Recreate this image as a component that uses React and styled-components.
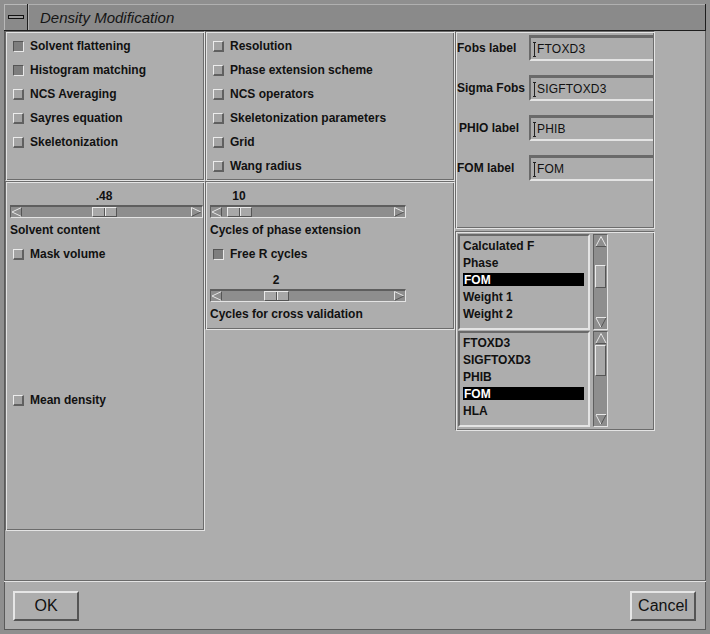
import React from "react";
import styled, { createGlobalStyle, css } from "styled-components";

const Global = createGlobalStyle`
  html, body { margin: 0; padding: 0; background: #9a9a9a; }
  #root { width: 710px; height: 634px; }
  * { box-sizing: border-box; }
`;

const FONT = `"Liberation Sans", Arial, Helvetica, sans-serif`;
const BG = "#adadad";
const DARK = "#6c6c6c";
const LIGHT = "#e4e4e4";

const Window = styled.div`
  width: 710px;
  height: 634px;
  display: flex;
  flex-direction: column;
  border: 4px solid #8f8f8f;
  box-shadow: inset 0 0 0 1px #5a5a5a;
  background: ${BG};
  font-family: ${FONT};
  color: #111;
`;

const TitleBar = styled.div`
  height: 27px;
  display: flex;
  align-items: stretch;
  background: #8a8a8a;
  border-bottom: 1px solid #1e1e1e;
  border-right: 1px solid #1e1e1e;
`;

const MenuButton = styled.div`
  width: 24px;
  display: flex;
  align-items: center;
  justify-content: center;
  border-right: 1px solid #1e1e1e;
  box-shadow: inset 1px 1px 0 #b8b8b8;
`;

const Dash = styled.div`
  width: 16px;
  height: 4px;
  background: #9a9a9a;
  border: 1px solid #111;
`;

const Title = styled.div`
  padding-left: 12px;
  display: flex;
  align-items: center;
  font-style: italic;
  font-size: 15px;
  color: #151515;
  box-shadow: inset 1px 1px 0 #b0b0b0;
  flex: 1;
`;

const Body = styled.div`
  flex: 1;
  display: flex;
  flex-direction: column;
`;

const Columns = styled.div`
  display: flex;
  align-items: flex-start;
  padding: 0 0 0 1px;
`;

const Column = styled.div`
  width: ${(p) => p.$w}px;
  display: flex;
  flex-direction: column;
`;

const Panel = styled.div`
  height: ${(p) => p.$h}px;
  border-top: 1px solid ${DARK};
  border-left: 1px solid ${DARK};
  border-right: 1px solid ${LIGHT};
  border-bottom: 1px solid ${LIGHT};
  box-shadow: inset 1px 1px 0 ${LIGHT}, inset -1px -1px 0 ${DARK};
  display: flex;
  flex-direction: column;
  padding: ${(p) => p.$pad || "0"};
`;

const CheckRow = styled.div`
  height: 24px;
  display: flex;
  align-items: center;
  gap: 6px;
  padding-left: ${(p) => p.$indent ?? 7}px;
  margin-top: ${(p) => p.$mt || 0}px;
  font-size: 12px;
  font-weight: bold;
  white-space: nowrap;
`;

const Box = styled.span`
  width: 11px;
  height: 11px;
  flex: none;
  ${(p) =>
    p.$on
      ? css`
          background: #7e7e7e;
          border-top: 1px solid #555;
          border-left: 1px solid #555;
          border-right: 1px solid #e8e8e8;
          border-bottom: 1px solid #e8e8e8;
        `
      : css`
          background: #a4a4a4;
          border-top: 1px solid #ececec;
          border-left: 1px solid #ececec;
          border-right: 2px solid #606060;
          border-bottom: 2px solid #606060;
        `}
`;

const Check = ({ on, children, indent, mt }) => (
  <CheckRow $indent={indent} $mt={mt}>
    <Box $on={on} />
    {children}
  </CheckRow>
);

const SliderWrap = styled.div`
  width: ${(p) => p.$w}px;
  display: flex;
  flex-direction: column;
  margin-left: ${(p) => p.$ml}px;
  margin-top: ${(p) => p.$mt || 0}px;
`;

const ValueLine = styled.div`
  position: relative;
  height: 17px;
  font-size: 12px;
  font-weight: bold;
`;

const ValueText = styled.span`
  position: absolute;
  top: 1px;
  transform: translateX(-50%);
`;

const Track = styled.div`
  position: relative;
  height: 13px;
  background: #8e8e8e;
  border-top: 2px solid #5e5e5e;
  border-left: 1px solid #5e5e5e;
  border-bottom: 1px solid ${LIGHT};
  border-right: 1px solid ${LIGHT};
  display: flex;
  justify-content: space-between;
  align-items: center;
`;

const Arrow = styled.svg`
  width: 12px;
  height: 10px;
  flex: none;
`;

const Thumb = styled.div`
  position: absolute;
  top: 0;
  width: 25px;
  height: 10px;
  background: #a8a8a8;
  border-top: 1px solid #eaeaea;
  border-left: 1px solid #eaeaea;
  border-right: 1px solid #555;
  border-bottom: 1px solid #555;
  &::after {
    content: "";
    position: absolute;
    left: 11px;
    top: 0;
    bottom: 0;
    width: 1px;
    background: #555;
    box-shadow: 1px 0 0 #eaeaea;
  }
`;

const SliderLabel = styled.div`
  font-size: 12px;
  font-weight: bold;
  height: 24px;
  display: flex;
  align-items: center;
  white-space: nowrap;
`;

const LeftArrow = () => (
  <Arrow viewBox="0 0 12 10">
    <path d="M10.5 0.5 L1 5 L10.5 9.5" fill="none" stroke="#e6e6e6" />
    <path d="M10.5 0.5 L10.5 9.5" stroke="#555" />
  </Arrow>
);
const RightArrow = () => (
  <Arrow viewBox="0 0 12 10">
    <path d="M1.5 0.5 L11 5" fill="none" stroke="#e6e6e6" />
    <path d="M1.5 0.5 L1.5 9.5" stroke="#e6e6e6" />
    <path d="M1.5 9.5 L11 5" stroke="#555" />
  </Arrow>
);

const Slider = ({ width, ml, mt, thumb, value, label }) => (
  <SliderWrap $w={width} $ml={ml} $mt={mt}>
    <ValueLine>
      <ValueText style={{ left: thumb + 13 }}>{value}</ValueText>
    </ValueLine>
    <Track>
      <LeftArrow />
      <Thumb style={{ left: thumb }} />
      <RightArrow />
    </Track>
    <SliderLabel>{label}</SliderLabel>
  </SliderWrap>
);

const FieldRow = styled.div`
  display: flex;
  align-items: center;
  height: 26px;
  margin-bottom: 14px;
`;

const FieldLabel = styled.div`
  width: 72px;
  flex: none;
  font-size: 12px;
  font-weight: bold;
  padding-left: ${(p) => p.$pl || 0}px;
  white-space: nowrap;
`;

const Field = styled.div`
  flex: 1;
  height: 26px;
  border-top: 3px solid #6a6a6a;
  border-left: 2px solid #6a6a6a;
  border-bottom: 2px solid ${LIGHT};
  display: flex;
  align-items: center;
  padding-left: 2px;
  padding-top: 1px;
  font-size: 12px;
  letter-spacing: 0.2px;
`;

const Caret = styled.span`
  width: 3px;
  height: 15px;
  margin-right: 1px;
  border-top: 1px solid #222;
  border-bottom: 1px solid #222;
  flex: none;
  background: linear-gradient(#222, #222) 1px 0 / 1px 100% no-repeat;
`;

const ListGroup = styled.div`
  display: flex;
  gap: 3px;
  height: ${(p) => p.$h}px;
`;

const ListBox = styled.div`
  width: 132px;
  border-top: 2px solid #6a6a6a;
  border-left: 2px solid #6a6a6a;
  border-bottom: 2px solid ${LIGHT};
  border-right: 2px solid ${LIGHT};
  padding: 1px 3px 0 3px;
  display: flex;
  flex-direction: column;
`;

const Item = styled.div`
  height: 17px;
  display: flex;
  align-items: center;
  padding-left: 0;
  font-size: 12px;
  font-weight: bold;
  ${(p) =>
    p.$sel &&
    css`
      background: #000;
      color: #fff;
      height: 13px;
      margin: 2px 1px 2px 0;
      padding-left: 1px;
    `}
`;

const ScrollBar = styled.div`
  width: 15px;
  background: #8e8e8e;
  border-top: 1px solid #5e5e5e;
  border-left: 1px solid #5e5e5e;
  border-right: 1px solid ${LIGHT};
  border-bottom: 1px solid ${LIGHT};
  position: relative;
  display: flex;
  flex-direction: column;
  justify-content: space-between;
  align-items: center;
`;

const ScrollArrow = styled.svg`
  width: 12px;
  height: 12px;
  flex: none;
`;

const ScrollThumb = styled.div`
  position: absolute;
  left: 1px;
  width: 11px;
  background: #a8a8a8;
  border-top: 1px solid #eaeaea;
  border-left: 1px solid #eaeaea;
  border-right: 1px solid #555;
  border-bottom: 1px solid #555;
`;

const Up = () => (
  <ScrollArrow viewBox="0 0 12 12">
    <path d="M1 11 L6 1.5 L11 11" fill="none" stroke="#e6e6e6" />
    <path d="M1 11.5 L11 11.5" stroke="#555" />
  </ScrollArrow>
);
const Down = () => (
  <ScrollArrow viewBox="0 0 12 12">
    <path d="M1 1 L6 10.5" fill="none" stroke="#e6e6e6" />
    <path d="M1 0.5 L11 0.5" stroke="#e6e6e6" />
    <path d="M11 1 L6 10.5" stroke="#555" />
  </ScrollArrow>
);

const ListPanel = styled.div`
  width: 200px;
  height: 200px;
  margin-top: 2px;
  border-top: 1px solid ${DARK};
  border-left: 1px solid ${DARK};
  border-right: 1px solid ${LIGHT};
  border-bottom: 1px solid ${LIGHT};
  box-shadow: inset 1px 1px 0 ${LIGHT}, inset -1px -1px 0 ${DARK};
  padding: 2px 2px;
  display: flex;
  flex-direction: column;
  gap: 1px;
`;

const Separator = styled.div`
  margin-top: auto;
  height: 2px;
  border-top: 1px solid #6a6a6a;
  border-bottom: 1px solid ${LIGHT};
`;

const ButtonRow = styled.div`
  height: 48px;
  display: flex;
  justify-content: space-between;
  align-items: flex-start;
  padding: 9px 10px 0 9px;
`;

const Button = styled.button`
  width: 66px;
  height: 30px;
  font-family: ${FONT};
  font-size: 16px;
  color: #111;
  background: #adadad;
  border-top: 2px solid #e6e6e6;
  border-left: 2px solid #e6e6e6;
  border-right: 2px solid #555;
  border-bottom: 2px solid #555;
  padding: 0;
`;

const List = ({ items, h, thumbTop, thumbH }) => (
  <ListGroup $h={h}>
    <ListBox>
      {items.map((it) => (
        <Item key={it.t} $sel={it.sel}>
          {it.t}
        </Item>
      ))}
    </ListBox>
    <ScrollBar>
      <Up />
      <ScrollThumb style={{ top: thumbTop, height: thumbH }} />
      <Down />
    </ScrollBar>
  </ListGroup>
);

export default function App() {
  return (
    <>
      <Global />
      <Window>
        <TitleBar>
          <MenuButton>
            <Dash />
          </MenuButton>
          <Title>Density Modification</Title>
        </TitleBar>
        <Body>
          <Columns>
            <Column $w={200}>
              <Panel $h={150} $pad="2px 0 0 0">
                <Check on>Solvent flattening</Check>
                <Check on>Histogram matching</Check>
                <Check>NCS Averaging</Check>
                <Check>Sayres equation</Check>
                <Check>Skeletonization</Check>
              </Panel>
              <Panel $h={350} $pad="6px 0 0 0">
                <Slider width={193} ml={4} thumb={81} value=".48" label="Solvent content" />
                <Check>Mask volume</Check>
                <Check mt={122}>Mean density</Check>
              </Panel>
            </Column>
            <Column $w={250}>
              <Panel $h={150} $pad="2px 0 0 0">
                <Check>Resolution</Check>
                <Check>Phase extension scheme</Check>
                <Check>NCS operators</Check>
                <Check>Skeletonization parameters</Check>
                <Check>Grid</Check>
                <Check>Wang radius</Check>
              </Panel>
              <Panel $h={149} $pad="6px 0 0 0">
                <Slider width={196} ml={4} thumb={16} value="10" label="Cycles of phase extension" />
                <Check on>Free R cycles</Check>
                <Slider width={196} ml={4} mt={6} thumb={53} value="2" label="Cycles for cross validation" />
              </Panel>
            </Column>
            <Column $w={200}>
              <Panel $h={198} $pad="3px 1px 0 1px">
                <FieldRow>
                  <FieldLabel>Fobs label</FieldLabel>
                  <Field>
                    <Caret />
                    FTOXD3
                  </Field>
                </FieldRow>
                <FieldRow>
                  <FieldLabel>Sigma Fobs</FieldLabel>
                  <Field>
                    <Caret />
                    SIGFTOXD3
                  </Field>
                </FieldRow>
                <FieldRow>
                  <FieldLabel $pl={2}>PHIO label</FieldLabel>
                  <Field>
                    <Caret />
                    PHIB
                  </Field>
                </FieldRow>
                <FieldRow>
                  <FieldLabel>FOM label</FieldLabel>
                  <Field>
                    <Caret />
                    FOM
                  </Field>
                </FieldRow>
              </Panel>
              <ListPanel>
                <List
                  h={96}
                  thumbTop={30}
                  thumbH={23}
                  items={[
                    { t: "Calculated F" },
                    { t: "Phase" },
                    { t: "FOM", sel: true },
                    { t: "Weight 1" },
                    { t: "Weight 2" },
                  ]}
                />
                <List
                  h={96}
                  thumbTop={13}
                  thumbH={31}
                  items={[
                    { t: "FTOXD3" },
                    { t: "SIGFTOXD3" },
                    { t: "PHIB" },
                    { t: "FOM", sel: true },
                    { t: "HLA" },
                  ]}
                />
              </ListPanel>
            </Column>
          </Columns>
          <Separator />
          <ButtonRow>
            <Button>OK</Button>
            <Button>Cancel</Button>
          </ButtonRow>
        </Body>
      </Window>
    </>
  );
}
